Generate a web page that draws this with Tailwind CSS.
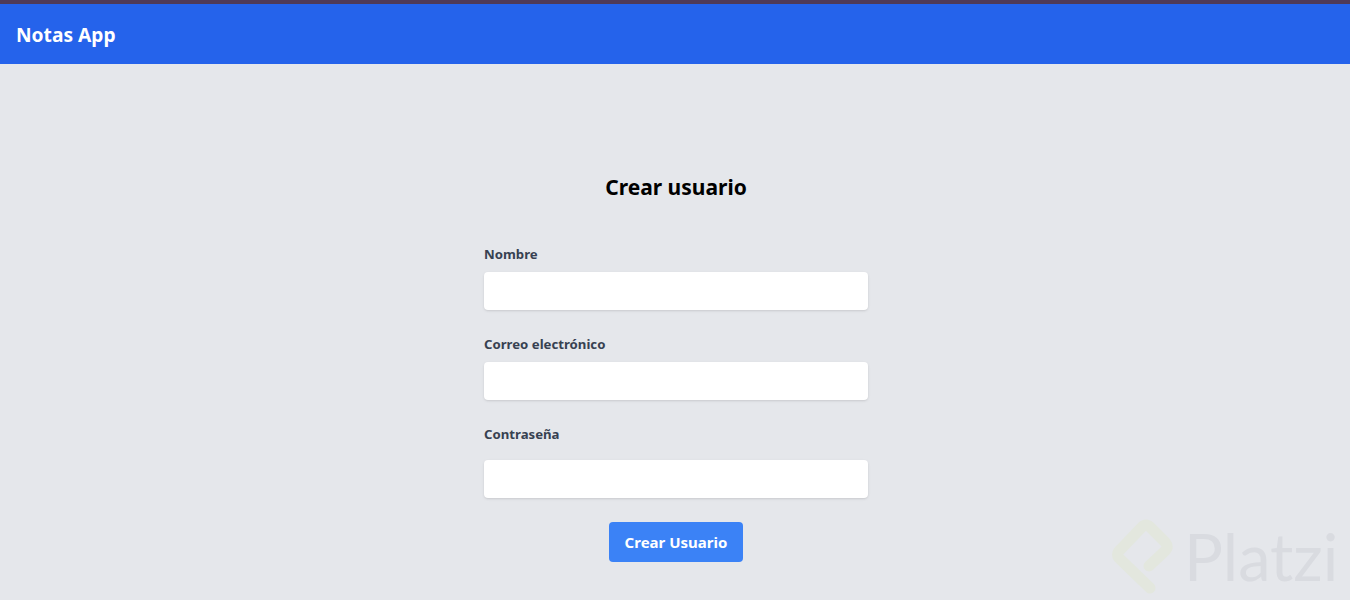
<!DOCTYPE html>
<html lang="en">
<head>
    <meta charset="UTF-8">
    <meta name="viewport" content="width=device-width, initial-scale=1.0">
    <title>Notas App</title>
    <script src="https://cdn.jsdelivr.net/npm/@tailwindcss/browser@4"></script>
</head>
<body class="relative h-[600px] overflow-hidden bg-[#e5e7eb] font-['Noto_Sans',sans-serif]">
    <!-- Top strip and nav -->
    <div class="h-1 bg-[#4f3a58]"></div>
    <nav class="flex h-[60px] items-center bg-[#2563eb] px-4 pt-0.5">
        <span class="text-[19.2px] font-bold text-white">Notas App</span>
    </nav>

    <!-- Form -->
    <main class="ml-[484px] w-96 pt-[105px]">
        <h1 class="mb-[39px] h-9 text-center text-[21px] leading-9 font-bold text-black">Crear usuario</h1>
        <form>
            <label class="mb-2 block h-5 text-[13.2px] leading-5 font-bold text-[#374151]">Nombre</label>
            <input type="text" class="mb-[24px] block h-[38px] w-full rounded bg-white shadow">
            <label class="mb-2 block h-5 text-[13.2px] leading-5 font-bold text-[#374151]">Correo electrónico</label>
            <input type="email" class="mb-[24px] block h-[38px] w-full rounded bg-white shadow">
            <label class="mb-4 block h-5 text-[13.2px] leading-5 font-bold text-[#374151]">Contraseña</label>
            <input type="password" class="mb-6 block h-[38px] w-full rounded bg-white shadow">
            <div class="flex justify-center">
                <button type="button" class="h-10 w-[134px] rounded bg-[#3b82f6] text-[15px] font-bold text-white">Crear Usuario</button>
            </div>
        </form>
    </main>

    <!-- Watermark -->
    <div class="absolute top-[517px] left-[1110px] flex items-center">
        <svg width="68" height="78" viewBox="0 0 68 78" fill="none" class="block">
            <path d="M40 71 L10 42 Q5 38 10 33 L32 10 Q36 6 40 10 L55 25 Q59 30 55 34 L39 49" stroke="#e3e7de" stroke-width="11" stroke-linecap="round" stroke-linejoin="round"/>
        </svg>
        <span class="ml-[6px] text-[65px] leading-none font-normal text-[#d9dbe0] font-['Lato',sans-serif]">Platzi</span>
    </div>
</body>
</html>
